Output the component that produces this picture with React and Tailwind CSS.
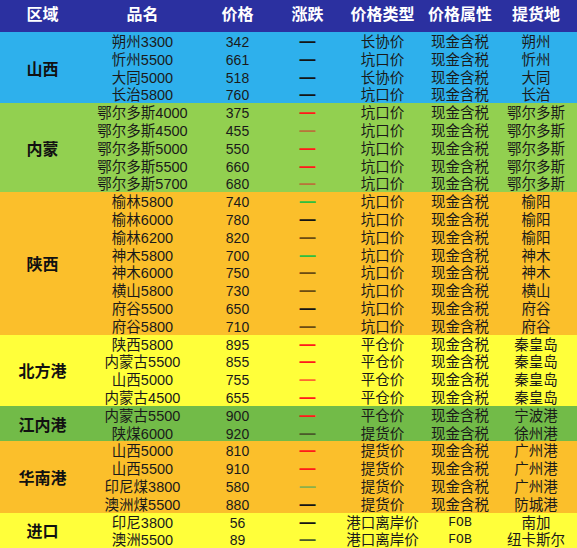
import React from 'react';

const cols = ['w-[85px]', 'w-[115px]', 'w-[75px]', 'w-[65px]', 'w-[85px]', 'w-[70px]', 'w-[82px]'];

const headers = ['区域', '品名', '价格', '涨跌', '价格类型', '价格属性', '提货地'];

// dash colours as they appear in the sheet
const RED = 'text-[#ff1a1a]';
const BRN = 'text-[#b8743a]';
const GRN = 'text-[#2fbf3f]';
const BLK = 'text-[#141414]';
const DRK = 'text-[#6b4c12]';
const ORG = 'text-[#ff6a30]';
const OLV = 'text-[#4a5a2a]';
const LGR = 'text-[#8cb04a]';

const groups = [
    {
        region: '山西',
        bg: 'bg-[#2eb0ec]',
        rows: [
            ['朔州3300', '342', BLK, '长协价', '现金含税', '朔州'],
            ['忻州5500', '661', BLK, '坑口价', '现金含税', '忻州'],
            ['大同5000', '518', BLK, '长协价', '现金含税', '大同'],
            ['长治5800', '760', BLK, '坑口价', '现金含税', '长治'],
        ],
    },
    {
        region: '内蒙',
        bg: 'bg-[#92d050]',
        rows: [
            ['鄂尔多斯4000', '375', RED, '坑口价', '现金含税', '鄂尔多斯'],
            ['鄂尔多斯4500', '455', BRN, '坑口价', '现金含税', '鄂尔多斯'],
            ['鄂尔多斯5000', '550', RED, '坑口价', '现金含税', '鄂尔多斯'],
            ['鄂尔多斯5500', '660', RED, '坑口价', '现金含税', '鄂尔多斯'],
            ['鄂尔多斯5700', '680', BRN, '坑口价', '现金含税', '鄂尔多斯'],
        ],
    },
    {
        region: '陕西',
        bg: 'bg-[#fbbf2b]',
        rows: [
            ['榆林5800', '740', GRN, '坑口价', '现金含税', '榆阳'],
            ['榆林6000', '780', BLK, '坑口价', '现金含税', '榆阳'],
            ['榆林6200', '820', DRK, '坑口价', '现金含税', '榆阳'],
            ['神木5800', '700', GRN, '坑口价', '现金含税', '神木'],
            ['神木6000', '750', DRK, '坑口价', '现金含税', '神木'],
            ['横山5800', '730', DRK, '坑口价', '现金含税', '横山'],
            ['府谷5500', '650', BLK, '坑口价', '现金含税', '府谷'],
            ['府谷5800', '710', DRK, '坑口价', '现金含税', '府谷'],
        ],
    },
    {
        region: '北方港',
        bg: 'bg-[#ffff3a]',
        rows: [
            ['陕西5800', '895', RED, '平仓价', '现金含税', '秦皇岛'],
            ['内蒙古5500', '855', RED, '平仓价', '现金含税', '秦皇岛'],
            ['山西5000', '755', ORG, '平仓价', '现金含税', '秦皇岛'],
            ['内蒙古4500', '655', RED, '平仓价', '现金含税', '秦皇岛'],
        ],
    },
    {
        region: '江内港',
        bg: 'bg-[#72bb48]',
        rows: [
            ['内蒙古5500', '900', RED, '平仓价', '现金含税', '宁波港'],
            ['陕煤6000', '920', OLV, '提货价', '现金含税', '徐州港'],
        ],
    },
    {
        region: '华南港',
        bg: 'bg-[#fbbf2b]',
        rows: [
            ['山西5000', '810', RED, '提货价', '现金含税', '广州港'],
            ['山西5500', '910', RED, '提货价', '现金含税', '广州港'],
            ['印尼煤3800', '580', LGR, '提货价', '现金含税', '广州港'],
            ['澳洲煤5500', '880', BLK, '提货价', '现金含税', '防城港'],
        ],
    },
    {
        region: '进口',
        bg: 'bg-[#ffff3a]',
        rows: [
            ['印尼3800', '56', BLK, '港口离岸价', 'FOB', '南加'],
            ['澳洲5500', '89', OLV, '港口离岸价', 'FOB', '纽卡斯尔'],
        ],
    },
];

const font = { fontFamily: '"Liberation Sans", "Noto Sans CJK SC", sans-serif' };

const Row = ({ row }) => {
    const [name, price, dash, type, attr, place] = row;
    return (
        <div className="flex h-[17.8px] leading-[18px] text-[14.5px] text-[#1a1a1a] pt-[1px]">
            <div className={`${cols[1]} text-center whitespace-nowrap`}>{name}</div>
            <div className={`${cols[2]} text-center text-[14px]`}>{price}</div>
            <div className={`${cols[3]} text-center font-bold text-[16px] ${dash}`}>—</div>
            <div className={`${cols[4]} text-center`}>{type}</div>
            <div className={`${cols[5]} text-center ${attr === 'FOB' ? 'font-["Liberation_Mono"] text-[13px]' : ''}`}>{attr}</div>
            <div className={`${cols[6]} text-center whitespace-nowrap`}>{place}</div>
        </div>
    );
};

export default function App() {
    return (
        <div className="w-[577px] h-[548px] overflow-hidden bg-[#72bb48]" style={font}>
            {/* Header */}
            <div className="flex h-[32px] items-center bg-[#2b30a0] text-white font-bold text-[16px] pb-[3px]">
                {headers.map((h, i) => (
                    <div key={h} className={`${cols[i]} text-center`}>{h}</div>
                ))}
            </div>

            {groups.map(g => (
                <div key={g.region} className={`flex ${g.bg} overflow-hidden`}>
                    <div className={`${cols[0]} flex items-center justify-center font-bold text-[16px] text-[#111] pt-[4px]`}>
                        {g.region}
                    </div>
                    <div className="flex flex-col">
                        {g.rows.map((r, i) => (
                            <Row key={i} row={r} />
                        ))}
                    </div>
                </div>
            ))}
        </div>
    );
}
